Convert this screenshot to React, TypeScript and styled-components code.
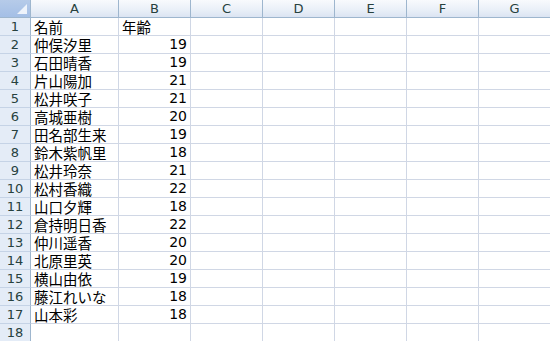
import React from "react";
import styled, { createGlobalStyle } from "styled-components";

const GlobalStyle = createGlobalStyle`
  html, body {
    margin: 0;
    padding: 0;
    background: #ffffff;
    overflow: hidden;
  }
`;

const rows: [string, number][] = [
  ["仲俣汐里", 19],
  ["石田晴香", 19],
  ["片山陽加", 21],
  ["松井咲子", 21],
  ["高城亜樹", 20],
  ["田名部生来", 19],
  ["鈴木紫帆里", 18],
  ["松井玲奈", 21],
  ["松村香織", 22],
  ["山口夕輝", 18],
  ["倉持明日香", 22],
  ["仲川遥香", 20],
  ["北原里英", 20],
  ["横山由依", 19],
  ["藤江れいな", 18],
  ["山本彩", 18],
];

const columns = ["A", "B", "C", "D", "E", "F", "G"];

const Sheet = styled.div`
  display: grid;
  grid-template-columns: 31px 88px repeat(6, 72px);
  grid-auto-rows: 18px;
  font-family: "Noto Sans CJK JP", "DejaVu Sans", sans-serif;
  color: #000;
  width: 550px;
  overflow: hidden;
`;

const Corner = styled.div`
  position: relative;
  background: linear-gradient(to bottom, #b6cbe9, #a4bfe6);
  border-right: 1px solid #9eb6ce;
  border-bottom: 1px solid #9eb6ce;

  &::after {
    content: "";
    position: absolute;
    right: 3px;
    bottom: 3px;
    width: 0;
    height: 0;
    border-left: 10px solid transparent;
    border-bottom: 10px solid #eef3fb;
  }
`;

const ColHead = styled.div`
  background: linear-gradient(to bottom, #f8fafd 0%, #eaf0f8 55%, #dbe4f2 100%);
  border-right: 1px solid #9eb6ce;
  border-bottom: 1px solid #9eb6ce;
  display: flex;
  align-items: center;
  justify-content: center;
  color: #27413e;
  font-family: "DejaVu Sans", sans-serif;
  font-size: 13px;
  line-height: 13px;
`;

const RowHead = styled.div`
  background: #e4ecf7;
  border-right: 1px solid #9eb6ce;
  border-bottom: 1px solid #c5d3e6;
  display: flex;
  align-items: center;
  justify-content: center;
  color: #27413e;
  font-family: "DejaVu Sans", sans-serif;
  font-size: 13px;
  line-height: 13px;
`;

const Cell = styled.div<{ $num?: boolean }>`
  background: #ffffff;
  border-right: 1px solid #d0d7e5;
  border-bottom: 1px solid #d0d7e5;
  display: flex;
  align-items: flex-end;
  justify-content: ${(p) => (p.$num ? "flex-end" : "flex-start")};
  padding: ${(p) => (p.$num ? "0 3px 2px 0" : "0 0 1px 3px")};
  white-space: nowrap;
  font-family: ${(p) =>
    p.$num
      ? `"DejaVu Sans", sans-serif`
      : `"Noto Sans CJK JP", sans-serif`};
  font-size: ${(p) => (p.$num ? "14px" : "14.5px")};
  line-height: ${(p) => (p.$num ? "14px" : "15px")};
`;

const Row: React.FC<{ n: number; a?: string; b?: string | number }> = ({
  n,
  a,
  b,
}) => (
  <>
    <RowHead>{n}</RowHead>
    <Cell>{a}</Cell>
    <Cell $num={typeof b === "number"}>{b}</Cell>
    {columns.slice(2).map((c) => (
      <Cell key={c} />
    ))}
  </>
);

export default function App() {
  return (
    <>
      <GlobalStyle />
      <Sheet>
        <Corner />
        {columns.map((c) => (
          <ColHead key={c}>{c}</ColHead>
        ))}
        <Row n={1} a="名前" b="年齢" />
        {rows.map(([name, age], i) => (
          <Row key={name} n={i + 2} a={name} b={age} />
        ))}
        <Row n={18} />
      </Sheet>
    </>
  );
}
